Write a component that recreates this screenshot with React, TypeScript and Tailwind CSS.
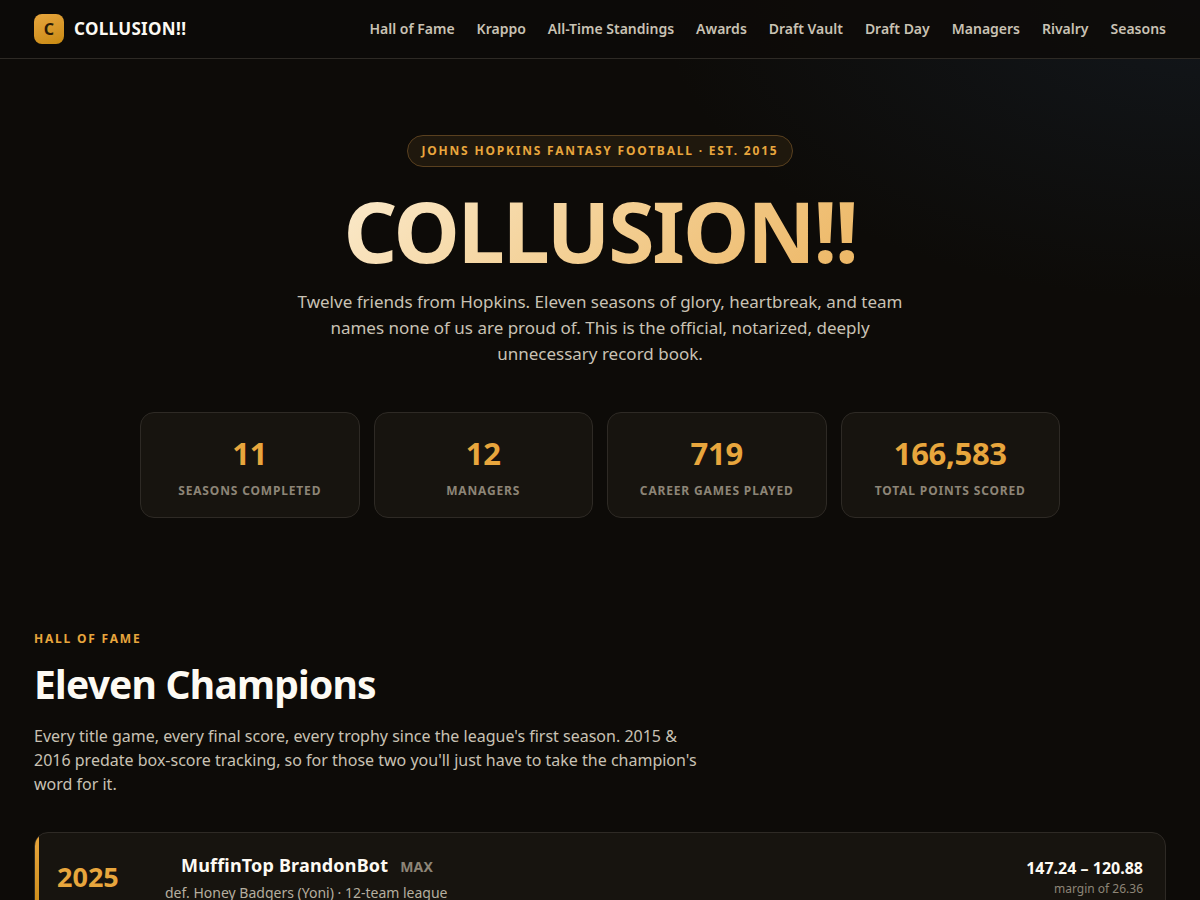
const navItems = [
  { label: "Hall of Fame", href: "#hall-of-fame" },
  { label: "Krappo", href: "#krappo" },
  { label: "All-Time Standings", href: "#standings" },
  { label: "Awards", href: "#awards" },
  { label: "Draft Vault", href: "#draft-vault" },
  { label: "Draft Day", href: "#draft-day" },
  { label: "Managers", href: "#managers" },
  { label: "Rivalry", href: "#rivalry" },
  { label: "Seasons", href: "#seasons" },
];

const stats = [
  { value: "11", label: "Seasons completed" },
  { value: "12", label: "Managers" },
  { value: "719", label: "Career games played" },
  { value: "166,583", label: "Total points scored" },
];

function Header() {
  return (
    <header className="sticky top-0 z-10 border-b border-[#2e2a25] bg-[#0d0b08]/85">
      <div className="flex items-center justify-between gap-6 px-[34px] py-[14px]">
        <a href="#top" className="flex items-center gap-[10px]">
          <span className="flex size-[30px] items-center justify-center rounded-lg bg-linear-160 from-[#e8a63d] to-[#c98a0e] text-base font-bold text-[#2a1b06]">
            C
          </span>
          <span className="text-[17px] leading-6 font-bold tracking-[0.02em] text-[#fdfaf3]">COLLUSION!!</span>
        </a>
        <nav className="flex flex-wrap gap-x-[22px] text-sm leading-5 font-semibold text-[#c9c2b4]">
          {navItems.map((item) => (
            <a key={item.href} href={item.href}>
              {item.label}
            </a>
          ))}
        </nav>
      </div>
    </header>
  );
}

function Hero() {
  return (
    <section className="flex flex-col items-center px-[34px] pt-[76px] pb-[111px] text-center">
      <p className="rounded-full border border-[#59401f] bg-[#1f180d] px-[14px] py-[6px] text-xs leading-[18px] font-bold tracking-[0.15em] text-[#e8a63d] uppercase">
        Johns Hopkins Fantasy Football · Est. 2015
      </p>
      <h1 className="mt-5 w-full max-w-[920px] bg-linear-135 from-[#fdf3de] from-10% via-[#f3cf93] via-50% to-[#e8a63d] to-100% bg-clip-text text-[84px] leading-[88px] font-bold tracking-[-0.025em] text-transparent">
        COLLUSION!!
      </h1>
      <p className="mt-[14px] max-w-[640px] text-[17px] leading-[26px] text-[#c9c2b4]">
        Twelve friends from Hopkins. Eleven seasons of glory, heartbreak, and team names none of us are
        proud of. This is the official, notarized, deeply unnecessary record book.
      </p>
      <dl className="mt-[45px] grid w-full max-w-[920px] grid-cols-4 gap-[14px]">
        {stats.map((stat) => (
          <div
            key={stat.label}
            className="flex flex-col-reverse gap-[6px] rounded-[14px] border border-[#2e2a25] bg-[#17140f] px-4 pt-[18px] pb-4"
          >
            <dt className="text-xs leading-5 font-bold tracking-[0.07em] text-[#8d8577] uppercase">
              {stat.label}
            </dt>
            <dd className="text-[31px] leading-11 font-bold tracking-[-0.01em] text-[#e8a63d]">{stat.value}</dd>
          </div>
        ))}
      </dl>
    </section>
  );
}

function HallOfFame() {
  return (
    <section id="hall-of-fame" className="px-[34px] pb-16">
      <p className="text-xs leading-5 font-bold tracking-[0.15em] text-[#e8a63d] uppercase">Hall of Fame</p>
      <h2 className="mt-[7px] text-[39px] leading-[56px] font-bold tracking-[-0.02em] text-[#fdfaf3]">
        Eleven Champions
      </h2>
      <p className="mt-3 max-w-[680px] text-base leading-6 text-[#c9c2b4]">
        Every title game, every final score, every trophy since the league's first season. 2015 &amp; 2016
        predate box-score tracking, so for those two you'll just have to take the champion's word for it.
      </p>
      <article className="mt-9 flex overflow-hidden rounded-[14px] border border-[#2e2a25] bg-[#17140f]">
        <div className="w-1 bg-linear-to-b from-[#e8a63d] to-[#c98a0e]" />
        <div className="flex flex-1 items-start pt-[18px] pr-[22px] pb-[14px] pl-[18px]">
          <p className="w-[108px] pt-[6px] text-[27px] leading-10 font-bold text-[#e8a63d]">2025</p>
          <div className="flex-1">
            <h3 className="flex items-baseline gap-3 pl-4 text-lg leading-7 font-bold tracking-[0.01em] text-[#fdfaf3]">
              MuffinTop BrandonBot
              <span className="text-sm font-bold text-[#8d8577]">MAX</span>
            </h3>
            <p className="mt-[2px] text-sm leading-6 text-[#b5ae9f]">
              def. Honey Badgers (Yoni) · 12-team league
            </p>
          </div>
          <div className="pt-[5px] text-right">
            <p className="text-base leading-6 font-bold text-[#fdfaf3]">147.24 – 120.88</p>
            <p className="text-xs leading-[18px] text-[#8d8577]">margin of 26.36</p>
          </div>
        </div>
      </article>
    </section>
  );
}

export default function App() {
  return (
    <div
      id="top"
      className="min-h-screen bg-[#0d0b08] bg-[radial-gradient(900px_500px_at_100%_0%,rgba(28,45,65,0.35),transparent_60%)] bg-no-repeat font-['Noto_Sans',sans-serif]"
    >
      <Header />
      <main>
        <Hero />
        <HallOfFame />
      </main>
    </div>
  );
}
